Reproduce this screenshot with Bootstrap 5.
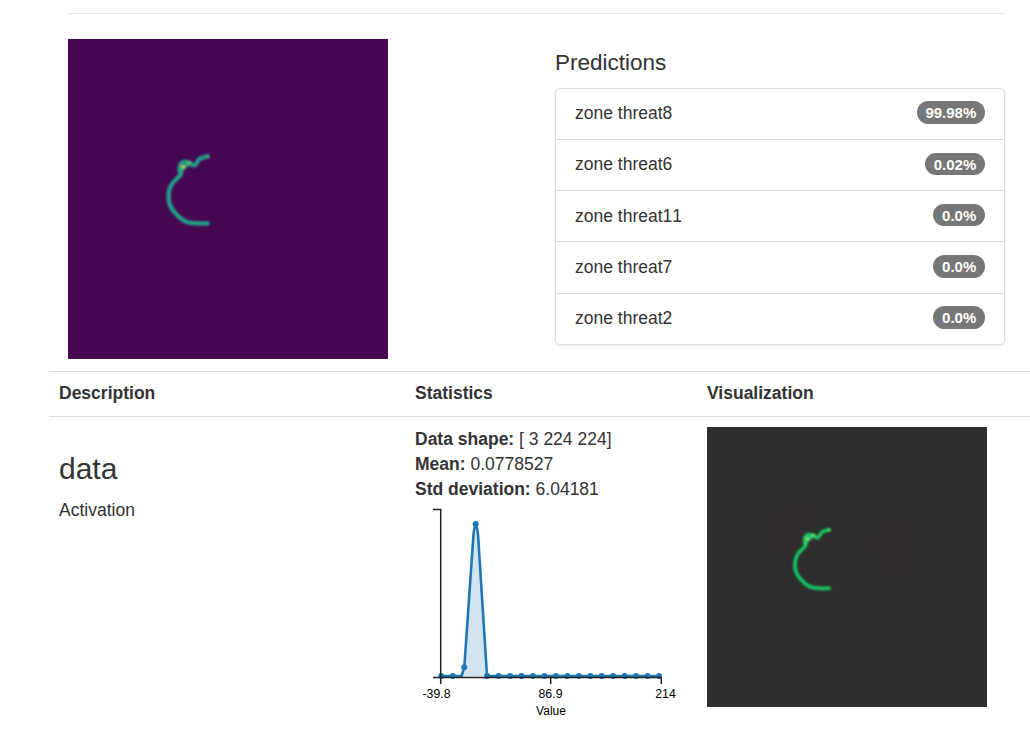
<!DOCTYPE html>
<html lang="en">
<head>
  <meta charset="UTF-8" />
  <meta name="viewport" content="width=device-width, initial-scale=1.0"/>
  <title>Classify One</title>
  <link href="https://cdn.jsdelivr.net/npm/bootstrap@5.3.0/dist/css/bootstrap.min.css" rel="stylesheet"/>
  <style>
    html, body { overflow: hidden; }
    body { font-family: "Liberation Sans", Arial, sans-serif; font-size: 17.5px; line-height: 1.42857; color: #333; background: #fff; }
    .top-wrap { padding: 13px 25px 0 68px; }
    .top-rule { margin: 0 0 25px; border-top: 1px solid #000; opacity: .1; }
    .heat-img { width: 320px; height: 320px; display: block; }
    .pred-col { width: 450px; padding-top: 10px; }
    .pred-title { font-size: 22.5px; line-height: 27px; margin: 0 0 12px; color: #333; font-weight: 400; }
    .pred-list { border-radius: 5px; box-shadow: 0 1px 2px rgba(0,0,0,.08); }
    .pred-list .list-group-item { padding: 12.5px 19px 12.75px; color: #333; border-color: #ddd; font-size: 17.5px; line-height: 25px; font-kerning: none; }
    .pred-list .list-group-item:first-child { padding-top: 12px; padding-bottom: 12.85px; }
    .pred-pill { background: #777; color: #fff; font-weight: 700; font-size: 15px; line-height: 17px; padding: 3px 8.75px 2.5px; margin-top: -2px; border-radius: 12px; }
    .layer-table { width: 981px; margin: 12px 0 0 49px; table-layout: fixed; --bs-table-color: #333; --bs-table-border-color: #ddd; }
    .layer-table th, .layer-table td { padding: 10px; vertical-align: top; }
    .layer-table thead th { padding: 9px 10px 11px; line-height: 24px; border-top: 1px solid #ddd; border-bottom: 1px solid #ddd; }
    .layer-table tbody td { border-bottom: 0; }
    .layer-name { font-size: 30px; line-height: 33px; margin: 25px 0 13px; font-weight: 400; }
    .stat-chart { display: block; }
    .stat-chart text { font-family: "Liberation Sans", Arial, sans-serif; font-size: 12px; fill: #000; }
    .stat-chart .tick-label { font-size: 12.3px; }
    .viz-img { width: 280px; height: 280px; display: block; }
  </style>
</head>
<body>
  <div class="top-wrap">
    <hr class="top-rule" />
    <div class="d-flex justify-content-between align-items-start">
      <svg class="heat-img" viewBox="0 0 280 280">
        <defs>
          <filter id="soft1" x="-20%" y="-20%" width="140%" height="140%"><feGaussianBlur stdDeviation="0.8"/></filter>
          <g id="stroke">
            <path d="M122.300 102.700 C119 103.300 116.500 104 114.700 105.300 C113 106.500 112.500 110.500 110.300 110.700 C108.500 110.800 107.500 108.500 106.300 108.200 C104 107.500 101 106.800 99.300 108.500 C97.500 110.500 97 114 98.700 118.700 C96 121.500 93.500 123.500 91.300 126.300 C88.800 130 87.800 135 88 139.700 C88.300 144 90 148 93 151.300 C96 155 99 158 103 159.700 C106 161 109 161.300 113 161.300 C116 161.500 119 161.300 122.300 161.300"/>
            <path d="M98.500 118 C99 115 100 112.500 104 110.500 L106.300 108.700"/>
          </g>
        </defs>
        <rect width="280" height="280" fill="#45074f"/>
        <g filter="url(#soft1)" fill="none" stroke-linecap="round" stroke-linejoin="round">
          <use href="#stroke" stroke="#2c7c8c" stroke-width="4"/>
          <use href="#stroke" stroke="#22a884" stroke-width="2.200"/>
          <path d="M100.500 112 L101 111.500" stroke="#dfe318" stroke-width="2.400"/>
          <path d="M105.500 108.500 L106.500 108.500" stroke="#7ad151" stroke-width="1.800"/>
          <path d="M122 103 L122.500 102.800" stroke="#7ad151" stroke-width="1.400"/>
        </g>
      </svg>
      <div class="pred-col">
        <h4 class="pred-title">Predictions</h4>
        <ul class="list-group pred-list">
          <li class="list-group-item d-flex justify-content-between align-items-center">zone threat8 <span class="pred-pill">99.98%</span></li>
          <li class="list-group-item d-flex justify-content-between align-items-center">zone threat6 <span class="pred-pill">0.02%</span></li>
          <li class="list-group-item d-flex justify-content-between align-items-center">zone threat11 <span class="pred-pill">0.0%</span></li>
          <li class="list-group-item d-flex justify-content-between align-items-center">zone threat7 <span class="pred-pill">0.0%</span></li>
          <li class="list-group-item d-flex justify-content-between align-items-center">zone threat2 <span class="pred-pill">0.0%</span></li>
        </ul>
      </div>
    </div>
  </div>

  <table class="table layer-table">
    <colgroup><col style="width:356px"><col style="width:292px"><col style="width:333px"></colgroup>
    <thead>
      <tr><th>Description</th><th>Statistics</th><th>Visualization</th></tr>
    </thead>
    <tbody>
      <tr>
        <td>
          <h3 class="layer-name">data</h3>
          <div>Activation</div>
        </td>
        <td>
          <div><b>Data shape:</b> [ 3 224 224]</div>
          <div><b>Mean:</b> 0.0778527</div>
          <div><b>Std deviation:</b> 6.04181</div>
          <svg class="stat-chart" width="272" height="218" viewBox="415 502 272 218">
            <path d="M462 677 L464.300 667.300 L473.500 534 Q475.700 518 478 534 L487 676 Z" fill="#1f77b4" fill-opacity=".2"/>
            <path d="M441.300 676 H461.500 L464.300 667.300 L473.500 534 Q475.700 516 478 534 L487 676 H659" fill="none" stroke="#1f77b4" stroke-width="2.600" stroke-linejoin="round"/>
            <g id="dots" fill="#1f77b4"></g>
            <g fill="none" stroke="#222" stroke-width="1.500">
              <path d="M433 509.500 H440.700 V677.500"/>
              <path d="M433 677.500 H661.500"/>
              <path d="M440.700 677.500 V684 M550.700 677.500 V684 M661.300 677.500 V684"/>
            </g>
            <text class="tick-label" x="436.500" y="698" text-anchor="middle">-39.8</text>
            <text class="tick-label" x="550.500" y="698" text-anchor="middle">86.9</text>
            <text class="tick-label" x="665.500" y="698" text-anchor="middle">214</text>
            <text x="551" y="715" text-anchor="middle">Value</text>
          </svg>
        </td>
        <td>
          <svg class="viz-img" viewBox="0 0 280 280">
            <defs>
              <filter id="soft2" x="-20%" y="-20%" width="140%" height="140%"><feGaussianBlur stdDeviation="0.8"/></filter>
              <filter id="soft3" x="-150%" y="-150%" width="400%" height="400%"><feGaussianBlur stdDeviation="12"/></filter>
            </defs>
            <rect width="280" height="280" fill="#2e2e2e"/>
            <ellipse cx="88" cy="105" rx="18" ry="28" fill="#38282c" opacity=".5" filter="url(#soft3)"/>
            <ellipse cx="188" cy="120" rx="14" ry="26" fill="#38282c" opacity=".6" filter="url(#soft3)"/>
            <g filter="url(#soft2)" fill="none" stroke-linecap="round" stroke-linejoin="round">
              <use href="#stroke" stroke="#12a04e" stroke-width="4"/>
              <use href="#stroke" stroke="#1fd06a" stroke-width="2.200"/>
              <path d="M100.500 112 L101 111.500" stroke="#b0f080" stroke-width="2.400"/>
              <path d="M105.500 108.500 L106.500 108.500" stroke="#8cf080" stroke-width="2"/>
              <path d="M122 103 L122.500 102.800" stroke="#8cf080" stroke-width="1.800"/>
            </g>
          </svg>
        </td>
      </tr>
    </tbody>
  </table>

  <script>
    // kde sample points along the x axis
    const dots = document.getElementById('dots');
    const ys = { 2: 667.3, 3: 524 };
    let html = '';
    for (let i = 0; i < 20; i++) {
      const x = 441.3 + i * 11.46;
      html += `<circle cx="${x.toFixed(1)}" cy="${ys[i] || 676}" r="3"/>`;
    }
    dots.innerHTML = html;
  </script>
  <script src="https://cdn.jsdelivr.net/npm/bootstrap@5.3.0/dist/js/bootstrap.bundle.min.js"></script>
</body>
</html>
